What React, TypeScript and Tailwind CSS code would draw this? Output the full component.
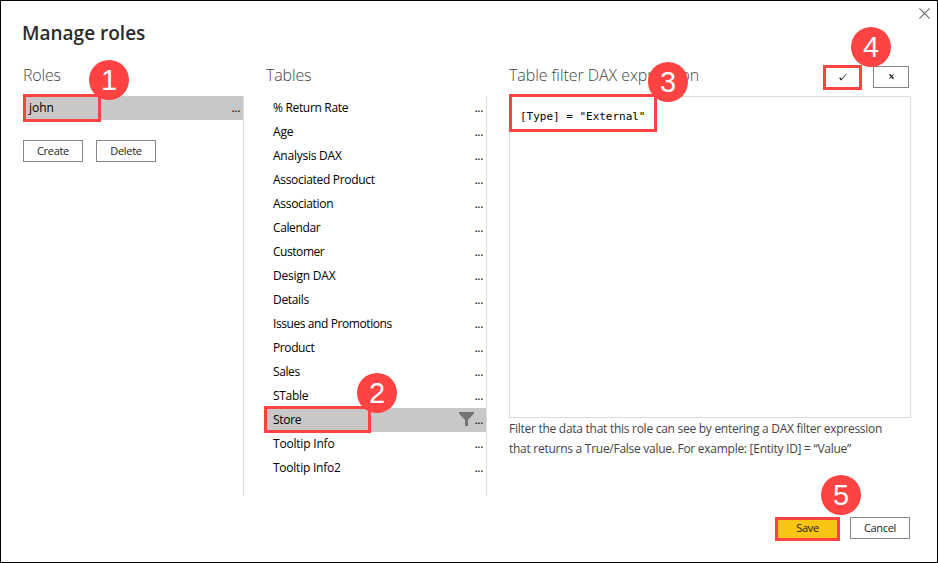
import React from "react";

const tables: { name: string; tracking: string }[] = [
  { name: "% Return Rate", tracking: "tracking-[-0.32px]" },
  { name: "Age", tracking: "tracking-[-0.15px]" },
  { name: "Analysis DAX", tracking: "tracking-[-0.24px]" },
  { name: "Associated Product", tracking: "tracking-[-0.31px]" },
  { name: "Association", tracking: "tracking-[-0.3px]" },
  { name: "Calendar", tracking: "tracking-[-0.38px]" },
  { name: "Customer", tracking: "tracking-[-0.45px]" },
  { name: "Design DAX", tracking: "tracking-[-0.2px]" },
  { name: "Details", tracking: "tracking-[-0.33px]" },
  { name: "Issues and Promotions", tracking: "tracking-[-0.41px]" },
  { name: "Product", tracking: "tracking-[-0.4px]" },
  { name: "Sales", tracking: "tracking-[-0.4px]" },
  { name: "STable", tracking: "tracking-[-0.32px]" },
  { name: "Store", tracking: "tracking-[-0.3px]" },
  { name: "Tooltip Info", tracking: "tracking-[-0.2px]" },
  { name: "Tooltip Info2", tracking: "tracking-[-0.24px]" },
];

function Badge({ n, className }: { n: number; className: string }) {
  return (
    <span
      className={`absolute z-20 flex h-10 w-10 items-center justify-center rounded-full bg-[#ff4343] font-['Liberation_Sans',sans-serif] text-[29px] leading-none tracking-normal text-white ${className}`}
    >
      {n}
    </span>
  );
}

function Outline({ className }: { className: string }) {
  return <span className={`pointer-events-none absolute z-10 border-[3px] border-[#ff4343] ${className}`} />;
}

function Button({ children, className = "w-[60px]" }: { children: React.ReactNode; className?: string }) {
  return (
    <button
      className={`flex h-[22px] items-center justify-center border border-[#858585] bg-white pb-px text-[11px] leading-none tracking-[-0.3px] text-[#222] ${className}`}
    >
      {children}
    </button>
  );
}

function Dots() {
  return <span className="mr-[3px] text-[12px] tracking-[-0.3px]">...</span>;
}

function Heading({ children, className = "" }: { children: React.ReactNode; className?: string }) {
  return <h2 className={`h-6 whitespace-nowrap text-[16px] leading-6 font-light text-[#444] ${className}`}>{children}</h2>;
}

export default function App() {
  return (
    <div className="relative flex h-[563px] w-[938px] flex-col border border-black bg-white pl-[22px] font-['Open_Sans','Noto_Sans',sans-serif] text-[12px] text-black">
      <svg className="absolute top-[7px] right-[7px] h-[11px] w-[11px]" viewBox="0 0 11 11" fill="none" stroke="#666" strokeWidth="1.1">
        <path d="M.4.4 10.6 10.6M10.6.4.4 10.6" />
      </svg>
      <h1 className="mt-[17px] -ml-px h-[30px] text-[19px] leading-[30px] font-semibold text-[#2b2b2b]">Manage roles</h1>

      <main className="mt-[15px] flex h-[434px]">
        <section className="w-[221px]">
          <Heading className="tracking-[-0.2px]">Roles</Heading>
          <div className="mt-[9px] h-[400px] border-r border-[#dcdcdc]">
            <div className="relative flex h-6 items-center justify-between bg-[#c8c8c8] pl-[6px]">
              <span>john</span>
              <Dots />
              <Outline className="-top-0.5 left-0 h-7 w-[78px]" />
              <Badge n={1} className="-top-9 left-[66px]" />
            </div>
            <div className="mt-5 flex gap-[13px]">
              <Button>Create</Button>
              <Button>Delete</Button>
            </div>
          </div>
        </section>

        <section className="ml-[22px] w-[221px]">
          <Heading className="tracking-[-0.15px]">Tables</Heading>
          <ul className="mt-[9px] h-[400px] border-r border-[#dcdcdc]">
            {tables.map(({ name, tracking }) => {
              const selected = name === "Store";
              return (
                <li key={name} className={`relative flex h-6 items-center pl-[7px] ${selected ? "bg-[#c8c8c8]" : ""}`}>
                  <span className={`mr-auto ${tracking}`}>{name}</span>
                  {selected && (
                    <>
                      <span className="absolute top-0 left-px h-6 w-px bg-[#f2c811]" />
                      <svg className="mt-[-2px] h-[14px] w-[15px]" viewBox="0 0 15 14" fill="#737373">
                        <path d="M0 0H15V1.6L9 8V14H6V8L0 1.6Z" />
                      </svg>
                      <Outline className="-top-0.5 -left-0.5 h-[27px] w-[107px]" />
                      <Badge n={2} className="top-[-35px] left-[91px]" />
                    </>
                  )}
                  <Dots />
                </li>
              );
            })}
          </ul>
        </section>

        <section className="ml-[22px] w-[402px]">
          <div className="relative flex h-6 items-start">
            <Heading className="mr-auto tracking-[-0.06px]">Table filter DAX expression</Heading>
            <div className="relative mt-[3px] mr-3">
              <Button className="w-[36px]">
                <svg className="h-2 w-2" viewBox="0 0 8 8" fill="none" stroke="#222">
                  <path d="M.8 4.6 2.4 7" strokeWidth="1.5" />
                  <path d="M2.2 7 7.4.8" strokeWidth=".9" />
                </svg>
              </Button>
              <Outline className="-top-px -left-0.5 h-[25px] w-[39px]" />
              <Badge n={4} className="top-[-39px] left-[26px]" />
            </div>
            <Button className="mt-[3px] mr-0.5 w-[36px]">
              <svg className="h-[5px] w-[5px]" viewBox="0 0 5 5" stroke="#222">
                <path d="M.6.3 4.4 4.7" strokeWidth="1.5" />
                <path d="M4.6.3.4 4.7" strokeWidth="1" />
              </svg>
            </Button>
            <Badge n={3} className="-top-[1px] left-[139px]" />
          </div>
          <div className="relative mt-[9px] h-[322px] border border-[#dcdcdc] pt-[12px] pl-[10px]">
            <code className="block font-['DejaVu_Sans_Mono',monospace] text-[11px] leading-4 tracking-[-0.02px] whitespace-pre">[Type] = "External"</code>
            <Outline className="-top-[3px] -left-px h-[38px] w-[148px]" />
          </div>
          <p className="mt-px text-[12px] leading-5 whitespace-nowrap text-[#444]">
            <span className="block tracking-[-0.27px]">Filter the data that this role can see by entering a DAX filter expression</span>
            <span className="block tracking-[-0.27px]">that returns a True/False value. For example: [Entity ID] = “Value”</span>
          </p>
        </section>
      </main>

      <footer className="mt-[20px] mr-[27px] flex justify-end gap-[10px]">
        <div className="relative">
          <button className="flex h-6 w-[65px] items-center justify-center border-[3px] border-[#ff4343] bg-[#f8c512] pb-px text-[11px] tracking-[-0.3px] text-[#222]">
            Save
          </button>
          <Badge n={5} className="top-[-42px] left-[46px]" />
        </div>
        <Button>Cancel</Button>
      </footer>
    </div>
  );
}
